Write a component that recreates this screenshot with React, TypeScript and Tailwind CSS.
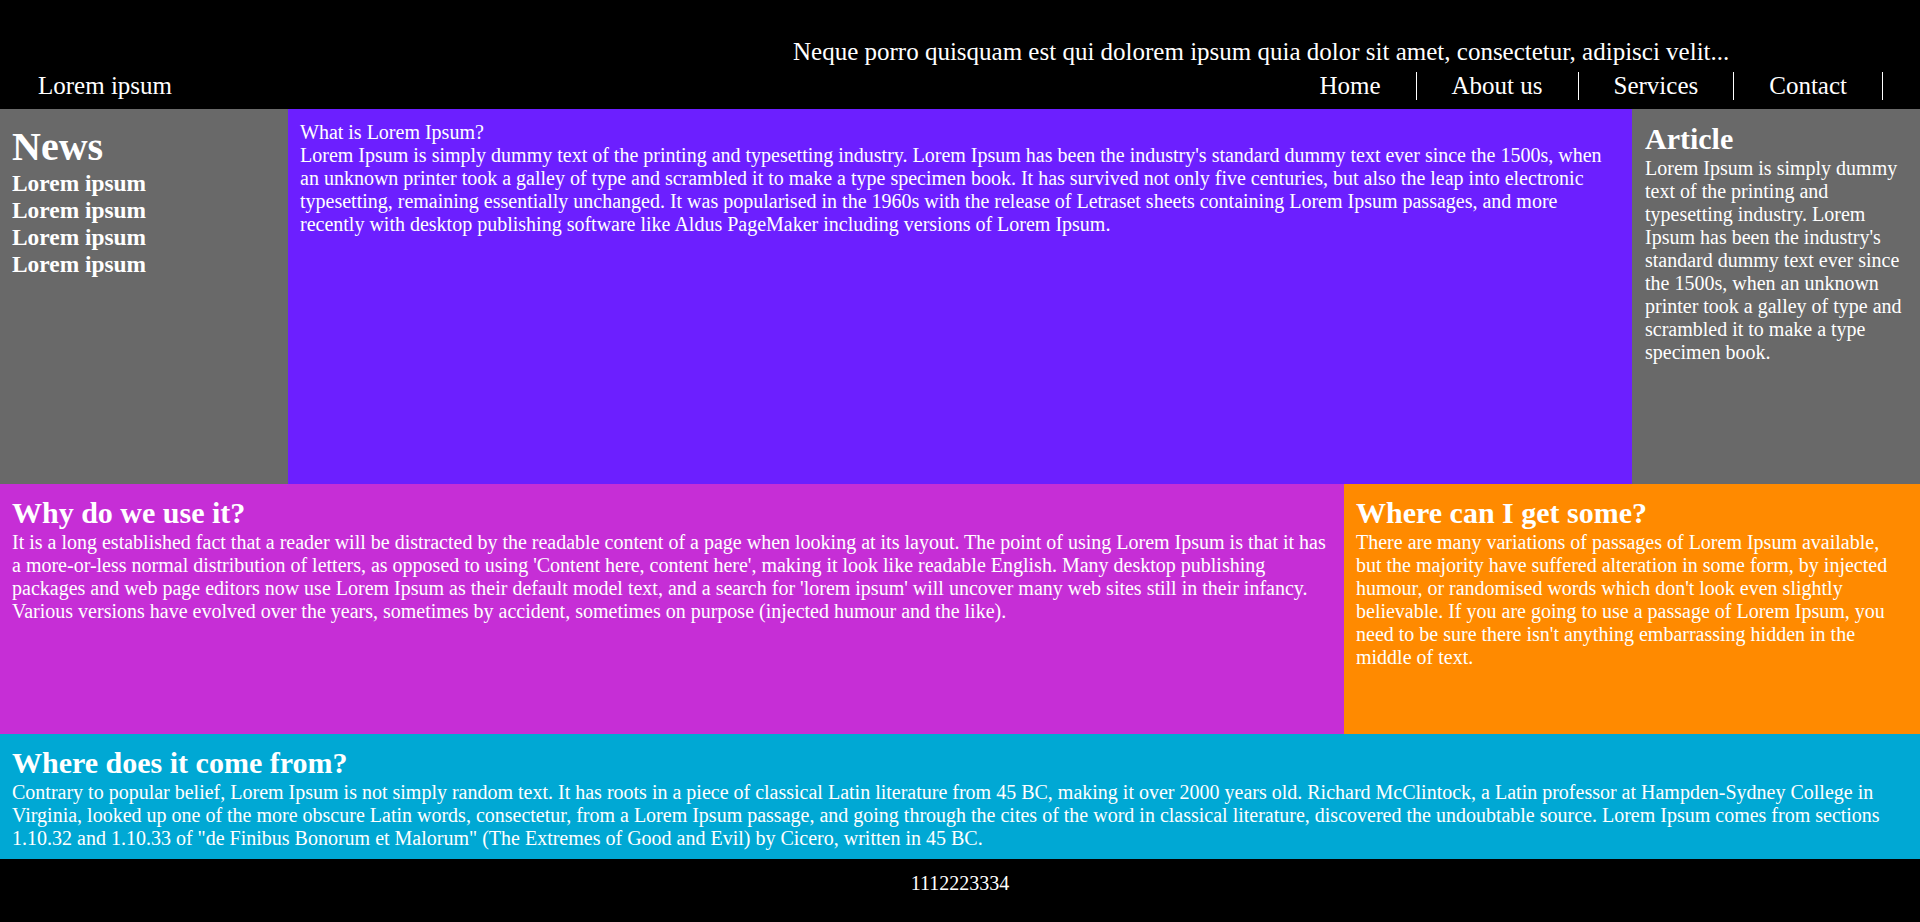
import React from "react";

export default function App() {
  const serif = { fontFamily: '"Liberation Serif", "Times New Roman", serif' };
  return (
    <div
      className="w-full h-[922px] grid grid-rows-[109px_375px_250px_125px_63px] text-white text-[20px] leading-[1.15] overflow-hidden"
      style={serif}
    >
      <header className="bg-black flex flex-col pt-[38px] text-[25px]">
        <div className="pl-[793px] h-[29px] whitespace-nowrap">
          Neque porro quisquam est qui dolorem ipsum quia dolor sit amet, consectetur, adipisci velit...
        </div>
        <div className="mt-[5px] flex items-center justify-between pl-[38px] pr-[37px]">
          <div className="h-[28px] leading-[28px]">Lorem ipsum</div>
          <nav className="flex">
            {["Home", "About us", "Services", "Contact"].map((t) => (
              <div key={t} className="h-[28px] leading-[28px] px-[35px] border-r border-white">
                {t}
              </div>
            ))}
          </nav>
        </div>
      </header>

      <div className="grid grid-cols-[288px_1344px_288px]">
        <div className="bg-[#696969] pt-[15px] px-3">
          <h1 className="text-[40px] font-bold leading-[46px]">News</h1>
          <h3 className="text-[23.4px] font-bold leading-[27px]">Lorem ipsum</h3>
          <h3 className="text-[23.4px] font-bold leading-[27px]">Lorem ipsum</h3>
          <h3 className="text-[23.4px] font-bold leading-[27px]">Lorem ipsum</h3>
          <h3 className="text-[23.4px] font-bold leading-[27px]">Lorem ipsum</h3>
        </div>
        <div className="bg-[#6c1fff] p-3 leading-[23px]">
          <p>What is Lorem Ipsum?</p>
          <p>
            Lorem Ipsum is simply dummy text of the printing and typesetting industry. Lorem Ipsum has been the
            industry's standard dummy text ever since the 1500s, when an unknown printer took a galley of type and
            scrambled it to make a type specimen book. It has survived not only five centuries, but also the leap into
            electronic typesetting, remaining essentially unchanged. It was popularised in the 1960s with the release of
            Letraset sheets containing Lorem Ipsum passages, and more recently with desktop publishing software like
            Aldus PageMaker including versions of Lorem Ipsum.
          </p>
        </div>
        <div className="bg-[#696969] pt-[13px] pl-[13px] pr-3 leading-[23px]">
          <h2 className="text-[30px] font-bold leading-[34.5px]">Article</h2>
          <p>
            Lorem Ipsum is simply dummy text of the printing and typesetting industry. Lorem Ipsum has been the
            industry's standard dummy text ever since the 1500s, when an unknown printer took a galley of type and
            scrambled it to make a type specimen book.
          </p>
        </div>
      </div>

      <div className="grid grid-cols-[1344px_576px]">
        <div className="bg-[#c62ed6] p-3 leading-[23px]">
          <h2 className="text-[30px] font-bold leading-[34.5px]">Why do we use it?</h2>
          <p>
            It is a long established fact that a reader will be distracted by the readable content of a page when
            looking at its layout. The point of using Lorem Ipsum is that it has a more-or-less normal distribution of
            letters, as opposed to using 'Content here, content here', making it look like readable English. Many
            desktop publishing packages and web page editors now use Lorem Ipsum as their default model text, and a
            search for 'lorem ipsum' will uncover many web sites still in their infancy. Various versions have evolved
            over the years, sometimes by accident, sometimes on purpose (injected humour and the like).
          </p>
        </div>
        <div className="bg-[#ff8a00] p-3 leading-[23px]">
          <h2 className="text-[30px] font-bold leading-[34.5px]">Where can I get some?</h2>
          <p>
            There are many variations of passages of Lorem Ipsum available, but the majority have suffered alteration
            in some form, by injected humour, or randomised words which don't look even slightly believable. If you are
            going to use a passage of Lorem Ipsum, you need to be sure there isn't anything embarrassing hidden in the
            middle of text.
          </p>
        </div>
      </div>

      <div className="bg-[#00a8d4] p-3 leading-[23px]">
        <h2 className="text-[30px] font-bold leading-[34.5px]">Where does it come from?</h2>
        <p>
          Contrary to popular belief, Lorem Ipsum is not simply random text. It has roots in a piece of classical Latin
          literature from 45 BC, making it over 2000 years old. Richard McClintock, a Latin professor at Hampden-Sydney
          College in Virginia, looked up one of the more obscure Latin words, consectetur, from a Lorem Ipsum passage,
          and going through the cites of the word in classical literature, discovered the undoubtable source. Lorem
          Ipsum comes from sections 1.10.32 and 1.10.33 of "de Finibus Bonorum et Malorum" (The Extremes of Good and
          Evil) by Cicero, written in 45 BC.
        </p>
      </div>

      <footer className="bg-black pt-[13px] text-center leading-[23px]">1112223334</footer>
    </div>
  );
}
